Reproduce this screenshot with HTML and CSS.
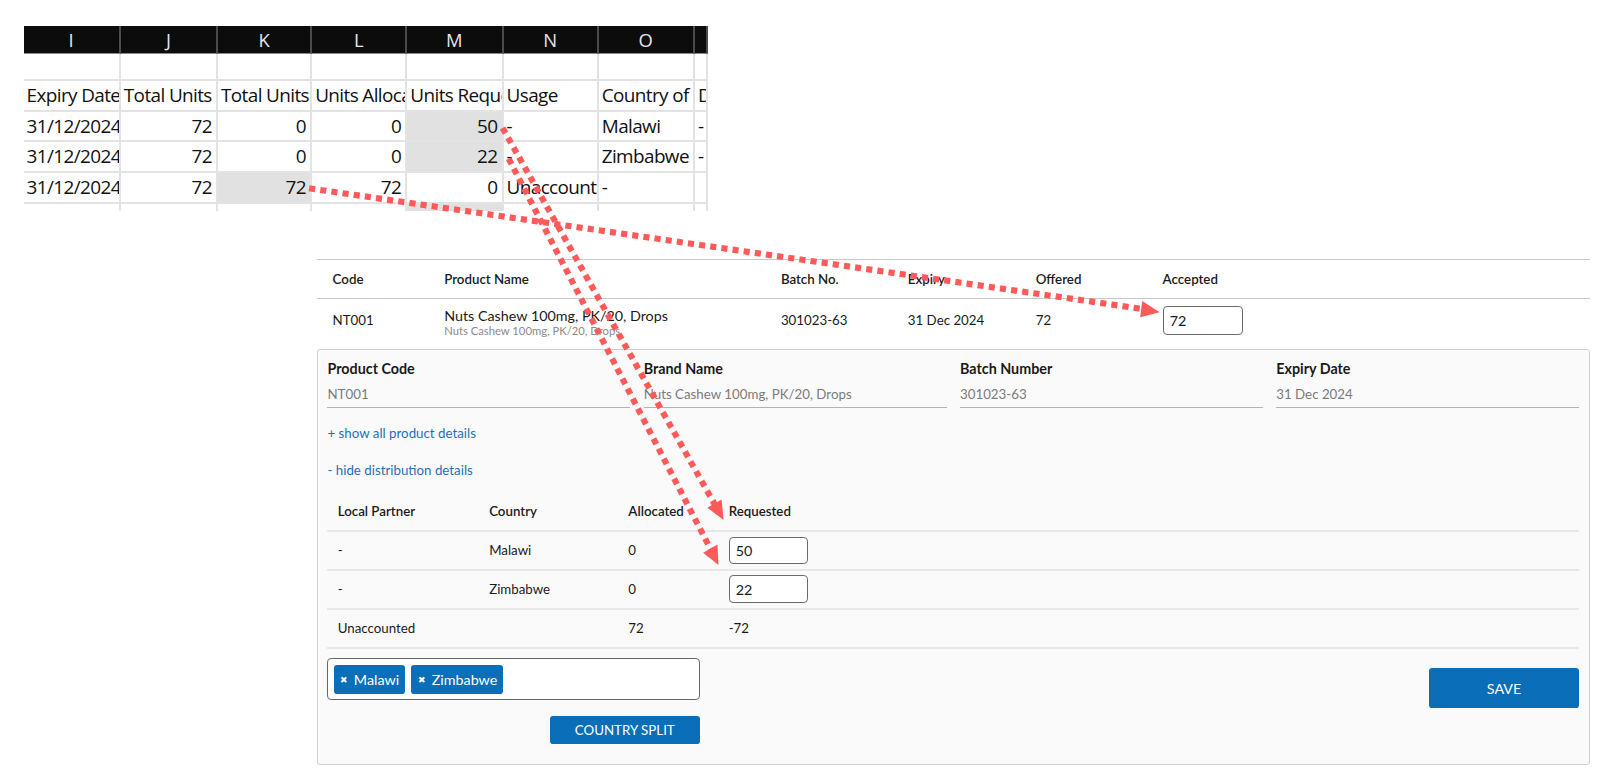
FILE: index.html
```html
<!DOCTYPE html>
<html lang="en">
<head>
    <meta charset="UTF-8">
    <title>Country split</title>
    <link rel="stylesheet" href="styles.css">
</head>
<body>
    <div class="sheet">
        <div class="letter">I</div><div class="letter">J</div><div class="letter">K</div><div class="letter">L</div>
        <div class="letter">M</div><div class="letter">N</div><div class="letter">O</div><div class="letter"></div>

        <div class="cell blank"></div><div class="cell blank"></div><div class="cell blank"></div><div class="cell blank"></div>
        <div class="cell blank"></div><div class="cell blank"></div><div class="cell blank"></div><div class="cell blank"></div>

        <div class="cell">Expiry Date</div><div class="cell">Total Units</div><div class="cell">Total Units</div><div class="cell">Units Allocated</div>
        <div class="cell">Units Requested</div><div class="cell">Usage</div><div class="cell">Country of</div><div class="cell">D</div>

        <div class="cell">31/12/2024</div><div class="cell num">72</div><div class="cell num">0</div><div class="cell num">0</div>
        <div class="cell num shade">50</div><div class="cell">-</div><div class="cell">Malawi</div><div class="cell">-</div>

        <div class="cell">31/12/2024</div><div class="cell num">72</div><div class="cell num">0</div><div class="cell num">0</div>
        <div class="cell num shade">22</div><div class="cell">-</div><div class="cell">Zimbabwe</div><div class="cell">-</div>

        <div class="cell">31/12/2024</div><div class="cell num">72</div><div class="cell num shade">72</div><div class="cell num">72</div>
        <div class="cell num">0</div><div class="cell">Unaccounted</div><div class="cell">-</div><div class="cell"></div>

        <div class="cell stub"></div><div class="cell stub"></div><div class="cell stub"></div><div class="cell stub"></div>
        <div class="cell stub shade"></div><div class="cell stub"></div><div class="cell stub"></div><div class="cell stub"></div>
    </div>

    <div class="offer">
        <div class="offer-row offer-head">
            <div>Code</div>
            <div>Product Name</div>
            <div>Batch No.</div>
            <div>Expiry</div>
            <div>Offered</div>
            <div>Accepted</div>
        </div>
        <div class="offer-row offer-item">
            <div>NT001</div>
            <div>
                <div class="product-name">Nuts Cashew 100mg, PK/20, Drops</div>
                <div class="product-sub">Nuts Cashew 100mg, PK/20, Drops</div>
            </div>
            <div>301023-63</div>
            <div>31 Dec 2024</div>
            <div>72</div>
            <div><input class="qty-input" type="text" value="72"></div>
        </div>

        <div class="details">
            <div class="fields">
                <div class="field">
                    <div class="field-label">Product Code</div>
                    <div class="field-value">NT001</div>
                </div>
                <div class="field">
                    <div class="field-label">Brand Name</div>
                    <div class="field-value">Nuts Cashew 100mg, PK/20, Drops</div>
                </div>
                <div class="field">
                    <div class="field-label">Batch Number</div>
                    <div class="field-value">301023-63</div>
                </div>
                <div class="field">
                    <div class="field-label">Expiry Date</div>
                    <div class="field-value">31 Dec 2024</div>
                </div>
            </div>

            <a class="toggle" href="#">+ show all product details</a>
            <a class="toggle" href="#">- hide distribution details</a>

            <div class="dist">
                <div class="dist-row dist-head">
                    <div>Local Partner</div>
                    <div>Country</div>
                    <div>Allocated</div>
                    <div>Requested</div>
                </div>
                <div class="dist-row">
                    <div>-</div>
                    <div>Malawi</div>
                    <div>0</div>
                    <div><input class="qty-input small" type="text" value="50"></div>
                </div>
                <div class="dist-row">
                    <div>-</div>
                    <div>Zimbabwe</div>
                    <div>0</div>
                    <div><input class="qty-input small" type="text" value="22"></div>
                </div>
                <div class="dist-row">
                    <div>Unaccounted</div>
                    <div></div>
                    <div>72</div>
                    <div>-72</div>
                </div>
            </div>

            <div class="actions">
                <div class="split">
                    <div class="tag-box">
                        <span class="tag"><span class="tag-x">&#10006;</span>Malawi</span>
                        <span class="tag"><span class="tag-x">&#10006;</span>Zimbabwe</span>
                    </div>
                    <button class="btn btn-split">COUNTRY SPLIT</button>
                </div>
                <button class="btn btn-save">SAVE</button>
            </div>
        </div>
    </div>

    <!-- annotation arrows drawn over the page -->
    <svg class="arrows" width="1560" height="760" viewBox="0 0 1560 760">
        <g stroke="#ff5a5a" stroke-width="6" stroke-dasharray="6 5" fill="none">
            <line x1="302" y1="184" x2="1117" y2="302"/>
            <line x1="491" y1="125" x2="699" y2="494"/>
            <line x1="497" y1="155" x2="695" y2="538"/>
        </g>
        <g fill="#ff5a5a">
            <polygon points="1133,305 1114,310 1116,294"/>
            <polygon points="707,508 691,496 705,488"/>
            <polygon points="702,552 687,540 701,532"/>
        </g>
    </svg>
</body>
</html>
```

FILE: styles.css
```css
:root {
    --blue: #0a6fb8;
    --line: #e3e3e3;
    --text: #1a1a1a;
    --muted: #7a7a7a;
}

* {
    box-sizing: border-box;
}

body {
    margin: 0;
    padding: 25px 0 0 23px;
    background: #ffffff;
    font-family: Lato, "Open Sans", sans-serif;
    color: var(--text);
    position: relative;
    zoom: 1.0235;
}

/* spreadsheet snippet */
.sheet {
    width: 669px;
    display: grid;
    grid-template-columns: 95px 95px 92px 93px 94px 93px 94px 13px;
    font-family: "Open Sans", sans-serif;
    font-size: 18.5px;
    color: #111;
}

.letter {
    height: 28px;
    line-height: 27px;
    background: #0c0c0c;
    color: #e6e6e6;
    text-align: center;
    font-size: 18px;
    border-right: 2px solid #4b4b4b;
    border-bottom: 1px solid #8a8a8a;
}

.cell {
    height: 30px;
    line-height: 29px;
    padding: 0 3px;
    border-right: 2px solid var(--line);
    border-bottom: 2px solid var(--line);
    white-space: nowrap;
    overflow: hidden;
    letter-spacing: -0.6px;
}

.cell.blank {
    height: 26px;
}

.cell.num {
    text-align: right;
    padding-right: 4px;
}

.cell.shade {
    background: #e1e1e1;
}

.cell.stub {
    height: 7px;
    border-bottom: none;
}

/* offer table */
.offer {
    margin: 47px 0 0 287px;
    width: 1244px;
    font-size: 13px;
}

.offer-row {
    display: grid;
    grid-template-columns: 109px 329px 124px 125px 124px 1fr;
    padding-left: 15px;
    align-items: center;
}

.offer-head {
    height: 39px;
    border-top: 1px solid #c8c8c8;
    border-bottom: 1px solid #c8c8c8;
    font-weight: 600;
}

.offer-item {
    height: 42px;
}

.product-name {
    font-size: 14px;
    margin-top: 3px;
}

.product-sub {
    font-size: 11px;
    color: #8a8a8a;
}

.qty-input {
    width: 79px;
    height: 28px;
    padding: 0 6px;
    border: 1px solid #6a6a6a;
    border-radius: 4px;
    font-family: Lato, sans-serif;
    font-size: 14px;
    color: var(--text);
    background: #fff;
}

.qty-input.small {
    width: 78px;
    height: 27px;
}

/* details panel */
.details {
    margin-top: 7px;
    background: #fafafa;
    border: 1px solid #cfcfcf;
    border-radius: 3px;
    padding: 10px 10px 20px 9px;
}

.fields {
    display: grid;
    grid-template-columns: repeat(4, 1fr);
    column-gap: 13px;
}

.field-label {
    font-size: 14px;
    font-weight: 700;
    line-height: 18px;
}

.field-value {
    margin-top: 7px;
    padding-bottom: 5px;
    font-size: 13px;
    color: var(--muted);
    border-bottom: 1px solid #b3b3b3;
}

.toggle {
    display: block;
    margin-top: 17px;
    font-size: 13px;
    color: #1f70b8;
    text-decoration: none;
}

.toggle + .toggle {
    margin-top: 20px;
}

.dist {
    margin-top: 14px;
}

.dist-row {
    display: grid;
    grid-template-columns: 148px 136px 98px 1fr;
    height: 38px;
    align-items: center;
    border-bottom: 2px solid #e8e8e8;
}

.dist-row > div {
    padding-left: 10px;
}

.dist-head {
    font-weight: 600;
    height: 39px;
}

/* bottom actions */
.actions {
    display: flex;
    justify-content: space-between;
    align-items: flex-start;
    margin-top: 9px;
}

.split {
    width: 364px;
    display: flex;
    flex-direction: column;
    align-items: flex-end;
    gap: 16px;
}

.tag-box {
    width: 100%;
    height: 41px;
    padding: 6px 5px;
    display: flex;
    gap: 6px;
    background: #fff;
    border: 1px solid #666;
    border-radius: 4px;
}

.tag {
    display: inline-flex;
    align-items: center;
    height: 28px;
    padding: 0 6px;
    background: var(--blue);
    color: #fff;
    border-radius: 3px;
    font-size: 14px;
}

.tag-x {
    font-size: 9px;
    margin-right: 6px;
}

.btn {
    border: none;
    border-radius: 3px;
    background: var(--blue);
    color: #fff;
    font-family: Lato, sans-serif;
    cursor: pointer;
}

.btn-split {
    width: 147px;
    height: 27px;
    font-size: 13px;
}

.btn-save {
    width: 147px;
    height: 39px;
    margin-top: 10px;
    font-size: 14px;
}

.arrows {
    position: absolute;
    left: 0;
    top: 0;
    pointer-events: none;
}
```
